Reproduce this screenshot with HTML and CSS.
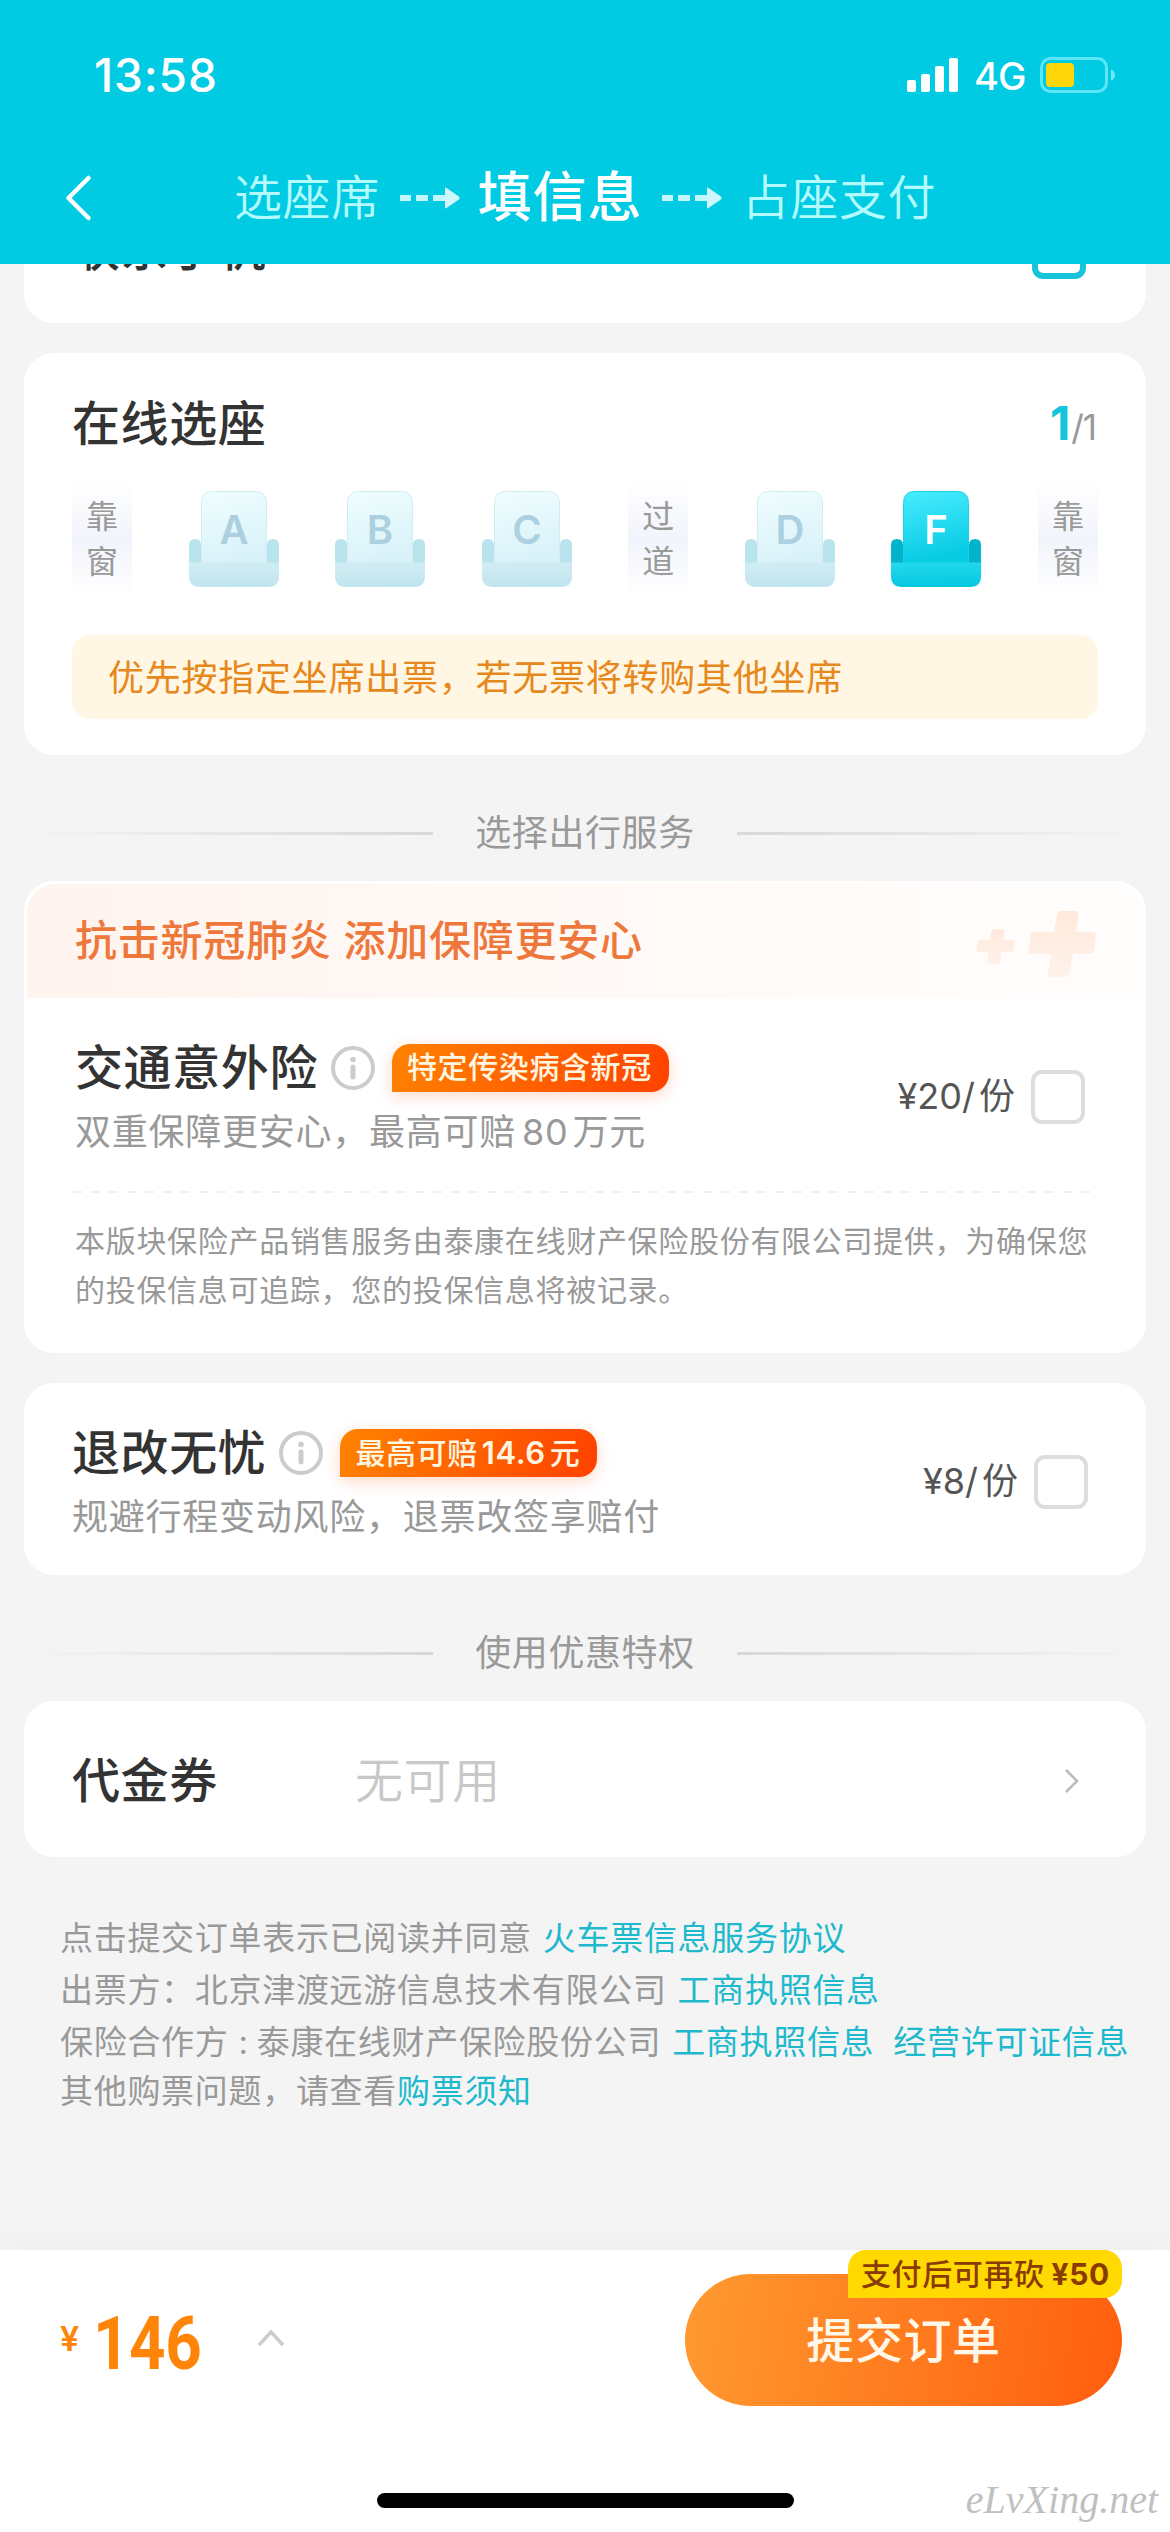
FILE: index.html
```html
<!DOCTYPE html>
<html lang="zh-CN">
<head>
<meta charset="utf-8">
<title>填信息</title>
<link rel="stylesheet" href="styles.css">
</head>
<body>
<svg class="defs" width="0" height="0" aria-hidden="true">
  <defs>
    <linearGradient id="back-idle" x1="0" y1="0" x2="0.25" y2="1"><stop offset="0" stop-color="#f0feff"/><stop offset="1" stop-color="#d9f2f9"/></linearGradient>
    <linearGradient id="base-idle" x1="0" y1="0" x2="0.1" y2="1"><stop offset="0" stop-color="#d2edf4"/><stop offset="1" stop-color="#c1e5ee"/></linearGradient>
    <linearGradient id="back-on" x1="0" y1="0" x2="0.2" y2="1"><stop offset="0" stop-color="#49ecff"/><stop offset="1" stop-color="#06cbe3"/></linearGradient>
    <linearGradient id="base-on" x1="0" y1="0" x2="0.1" y2="1"><stop offset="0" stop-color="#24d9ee"/><stop offset="1" stop-color="#06c8df"/></linearGradient>
    <linearGradient id="plus" x1="0" y1="0" x2="0" y2="1"><stop offset="0" stop-color="#ffe9dc"/><stop offset="1" stop-color="#fff2ea"/></linearGradient>
    <symbol id="seat" viewBox="0 0 90 96">
      <path d="M0 54q0-6 6-6t6 6v18H0zM90 54q0-6-6-6t-6 6v18h12z" fill="#b9e3ed"/>
      <path d="M12.500 72V12.500q0-12 11-12h43q11 0 11 12V72z" fill="url(#back-idle)" stroke="#d3ecf3"/>
      <path d="M0 71.500h90V85q0 11-11 11H11Q0 96 0 85z" fill="url(#base-idle)"/>
    </symbol>
    <symbol id="seat-on" viewBox="0 0 90 96">
      <path d="M0 54q0-6 6-6t6 6v18H0zM90 54q0-6-6-6t-6 6v18h12z" fill="#02b4cb"/>
      <path d="M12.500 72V12.500q0-12 11-12h43q11 0 11 12V72z" fill="url(#back-on)" stroke="#1ecfe3"/>
      <path d="M0 71.500h90V85q0 11-11 11H11Q0 96 0 85z" fill="url(#base-on)"/>
    </symbol>
    <symbol id="info" viewBox="0 0 44 44">
      <circle cx="22" cy="22" r="20" fill="none" stroke="#ccc" stroke-width="4"/>
      <circle cx="22" cy="13.500" r="2.800" fill="#ccc"/>
      <path d="M22 21v10" stroke="#ccc" stroke-width="5" stroke-linecap="round"/>
    </symbol>
    <symbol id="step-arrow" viewBox="0 0 60 22">
      <path d="M0 11h11M16 11h12M33 11h12" stroke="#c3f5fc" stroke-width="6"/>
      <path d="M45 1.500q0-1.500 1.500-.6l12 8.300q2.200 1.800 0 3.600l-12 8.300q-1.500.9-1.500-.6z" fill="#d0f7fc"/>
    </symbol>
  </defs>
</svg>

<div class="screen">
  <header class="header">
    <div class="status">
      <span class="status-time">13:58</span>
      <div class="status-right">
        <svg width="52" height="34" viewBox="0 0 52 34" fill="#fff"><rect x="0" y="22" width="9" height="12" rx="2"/><rect x="14" y="16" width="9" height="18" rx="2"/><rect x="28" y="8" width="9" height="26" rx="2"/><rect x="42" y="0" width="9" height="34" rx="2"/></svg>
        <span class="status-net">4G</span>
        <svg width="75" height="36" viewBox="0 0 75 36"><rect x="1.500" y="1.500" width="65" height="33" rx="9" fill="none" stroke="#5ce6f7" stroke-width="3"/><rect x="6" y="6" width="28" height="24" rx="4" fill="#ffd60a"/><path d="M71 12.500q4 1.500 4 5.500t-4 5.500z" fill="#6ceaf8"/></svg>
      </div>
    </div>
    <nav class="steps">
      <svg class="back" width="28" height="48" viewBox="0 0 28 48"><path d="M24.500 4L4.500 24l20 20" fill="none" stroke="#fff" stroke-width="4.500" stroke-linecap="round" stroke-linejoin="round"/></svg>
      <span class="step">选座席</span>
      <svg class="arrow arrow-first" width="60" height="22"><use href="#step-arrow"/></svg>
      <span class="step step-current">填信息</span>
      <svg class="arrow arrow-second" width="60" height="22"><use href="#step-arrow"/></svg>
      <span class="step">占座支付</span>
    </nav>
  </header>

  <main class="content">
    <section class="card contact">
      <span class="title contact-label">联系手机</span>
      <span class="checkbox checkbox-accent"></span>
    </section>

    <section class="card seats">
      <div class="seats-head">
        <h2 class="title">在线选座</h2>
        <div class="count"><b>1</b><span>/1</span></div>
      </div>
      <div class="seat-row">
        <span class="side">靠<br>窗</span>
        <svg class="seat" viewBox="0 0 90 96"><use href="#seat"/><text x="45" y="52.500">A</text></svg>
        <svg class="seat" viewBox="0 0 90 96"><use href="#seat"/><text x="45" y="52.500">B</text></svg>
        <svg class="seat" viewBox="0 0 90 96"><use href="#seat"/><text x="45" y="52.500">C</text></svg>
        <span class="side">过<br>道</span>
        <svg class="seat" viewBox="0 0 90 96"><use href="#seat"/><text x="45" y="52.500">D</text></svg>
        <svg class="seat seat-selected" viewBox="0 0 90 96"><use href="#seat-on"/><text x="45" y="52.500">F</text></svg>
        <span class="side">靠<br>窗</span>
      </div>
      <p class="notice">优先按指定坐席出票，若无票将转购其他坐席</p>
    </section>

    <div class="divider"><span>选择出行服务</span></div>

    <section class="card insurance">
      <div class="banner">
        <span>抗击新冠肺炎 添加保障更安心</span>
        <svg class="crosses" width="120" height="68" viewBox="0 0 120 68" fill="url(#plus)">
          <path d="M18 19h8q3 0 2.500 3l-1.300 8H36q3 0 2.500 3l-.8 6q-.5 3-3 3h-9l-1.500 9q-.5 3-3 3h-8q-2.500 0-2-3l1.500-9H3q-3 0-2.500-3l1-6q.5-3 3-3h9.500l1.300-8q.4-3 2.700-3z"/>
          <path d="M85 1h14q4 0 3.500 4l-2.500 17h16q4.500 0 4 4l-2 14q-.5 4-4 4H97l-3.500 19q-.6 4-4 4h-14q-4 0-3.500-4l3.500-19H56q-4 0-3.500-4l2-14q.5-4 4-4H78l3-17q.6-4 4-4z"/>
        </svg>
      </div>
      <div class="product">
        <div class="product-main">
          <div class="product-head">
            <h2 class="title">交通意外险</h2>
            <svg class="info" width="44" height="44"><use href="#info"/></svg>
            <span class="tag">特定传染病含新冠</span>
          </div>
          <p class="product-sub">双重保障更安心，最高可赔<span class="num">80</span>万元</p>
        </div>
        <span class="price">¥20/<i>份</i></span>
        <span class="checkbox"></span>
      </div>
      <div class="dashes"></div>
      <p class="disclaimer">本版块保险产品销售服务由泰康在线财产保险股份有限公司提供，为确保您<br>的投保信息可追踪，您的投保信息将被记录。</p>
    </section>

    <section class="card refund">
      <div class="product">
        <div class="product-main">
          <div class="product-head">
            <h2 class="title">退改无忧</h2>
            <svg class="info" width="44" height="44"><use href="#info"/></svg>
            <span class="tag">最高可赔<span class="tag-num">14.6</span>元</span>
          </div>
          <p class="product-sub">规避行程变动风险，退票改签享赔付</p>
        </div>
        <span class="price">¥8/<i>份</i></span>
        <span class="checkbox"></span>
      </div>
    </section>

    <div class="divider"><span>使用优惠特权</span></div>

    <section class="card voucher">
      <h2 class="title">代金券</h2>
      <span class="voucher-value">无可用</span>
      <svg width="16" height="26" viewBox="0 0 16 26"><path d="M2 2l11 11L2 24" fill="none" stroke="#bbb" stroke-width="2.500"/></svg>
    </section>

    <div class="terms">
      <p>点击提交订单表示已阅读并同意<a class="gap">火车票信息服务协议</a></p>
      <p>出票方：北京津渡远游信息技术有限公司<a class="gap">工商执照信息</a></p>
      <p>保险合作方<span class="colon">:</span>泰康在线财产保险股份公司<a class="gap">工商执照信息</a><a class="gap-wide">经营许可证信息</a></p>
      <p class="terms-last">其他购票问题，请查看<a>购票须知</a></p>
    </div>
  </main>

  <footer class="footer">
    <div class="total"><span class="yen">¥</span><span class="amount">146</span></div>
    <svg class="caret" width="28" height="18" viewBox="0 0 28 18"><path d="M2 16L14 3l12 13" fill="none" stroke="#ccc" stroke-width="3.500"/></svg>
    <div class="submit">提交订单<span class="badge">支付后可再砍<b>¥50</b></span></div>
    <div class="home"></div>
    <span class="watermark">eLvXing.net</span>
  </footer>
</div>
</body>
</html>
```
FILE: styles.css
```css
* { box-sizing: border-box; }

body, h2, p { margin: 0; }

body {
  background: #f4f4f4;
  font-family: Inter, "Noto Sans CJK SC", sans-serif;
  color: #333;
}

.defs { position: absolute; }
svg { display: block; flex: none; }
i { font-style: normal; }

.screen {
  width: 1170px;
  height: 2532px;
  overflow: hidden;
  display: flex;
  flex-direction: column;
  white-space: nowrap;
}

/* header */
.header { height: 264px; flex: none; background: #00cbe3; color: #fff; }

.status {
  height: 149px;
  padding: 0 55px 0 94px;
  display: flex;
  align-items: center;
  justify-content: space-between;
}
.status-time { font-size: 46px; font-weight: 550; letter-spacing: 0.9px; }
.status-right { display: flex; align-items: center; }
.status-net { width: 50px; margin: 2px 16px 0 15px; font-size: 38px; font-weight: 450; letter-spacing: -1px; }

.steps { height: 98px; padding-left: 64px; display: flex; align-items: center; }
.back { margin-right: 142px; }
.step { font-size: 48px; line-height: 60px; letter-spacing: 0.6px; font-weight: 350; color: #b4fbff; }
.step-current { font-size: 54px; font-weight: 500; letter-spacing: 1px; color: #fff; }
.arrow-first { margin: 0 18px 0 20px; }
.arrow-second { margin: 0 20px 0 19px; }

/* cards */
.content { flex: 1; padding: 0 24px; }
.card { background: #fff; border-radius: 30px; }
.title { font-size: 48px; line-height: 60px; font-weight: 500; letter-spacing: 0.6px; color: #333; }

.checkbox { width: 54px; height: 54px; flex: none; border: 4px solid #ddd; border-radius: 11px; background: #fff; }
.checkbox-accent { border: 6px solid #18c4da; }

.contact {
  height: 59px;
  padding: 0 60px 44px 48px;
  border-radius: 0 0 30px 30px;
  display: flex;
  align-items: flex-end;
  justify-content: space-between;
  overflow: hidden;
}
.contact-label { line-height: 48px; margin-bottom: 6px; }

.seats { height: 402px; margin-top: 30px; padding: 41px 48px 0; }
.seats-head { height: 60px; display: flex; justify-content: space-between; align-items: center; }
.count { display: flex; align-items: baseline; padding-right: 2px; line-height: 60px; margin-top: 2px; }
.count b { font-size: 47px; font-weight: 700; color: #14c5db; margin-right: 1px; }
.count span { font-size: 35px; color: #999; letter-spacing: -1px; }

.seat-row { height: 116px; margin-top: 27px; display: flex; justify-content: space-between; align-items: center; }
.side {
  width: 60px;
  height: 116px;
  padding: 13px 0;
  font-size: 32px;
  line-height: 45px;
  text-align: center;
  color: #999;
  background: linear-gradient(#fff, #f1f4fb 50%, #fff);
}
.seat { width: 90px; height: 96px; }
.seat text { font-size: 40px; font-weight: 600; text-anchor: middle; fill: #acd0df; }
.seat-selected text { fill: #fff; }

.notice {
  height: 84px;
  margin-top: 38px;
  padding-left: 36px;
  border-radius: 18px;
  background: #fff7e4;
  color: #e6881b;
  font-size: 36px;
  line-height: 86px;
  letter-spacing: 0.75px;
}

.divider {
  height: 126px;
  padding-top: 30px;
  display: flex;
  align-items: center;
  gap: 42px;
  font-size: 36px;
  line-height: 48px;
  letter-spacing: 0.6px;
  color: #999;
}
.divider::before, .divider::after { content: ""; flex: 1; height: 3px; background: linear-gradient(90deg, #f4f4f4, #d8d8d8); }
.divider::after { background: linear-gradient(270deg, #f4f4f4, #d8d8d8); }

/* insurance */
.insurance { height: 472px; padding: 3px; }
.banner {
  height: 114px;
  padding: 0 47px 0 48px;
  border-radius: 28px 28px 0 0;
  background: linear-gradient(90deg, #fff4ef, #fffaf7 55%, #fffdfc);
  display: flex;
  align-items: center;
  justify-content: space-between;
  color: #ee783c;
  font-size: 42px;
  line-height: 60px;
  font-weight: 500;
  letter-spacing: 0.75px;
}
.crosses { margin-top: 6px; }
.product { display: flex; align-items: center; }
.insurance .product { height: 193px; padding: 5px 58px 0 48px; }
.product-main { flex: 1; }
.product-head { height: 60px; display: flex; align-items: center; }
.info { margin: 0 17px 0 13px; }
.tag {
  height: 48px;
  padding: 0 17px 0 15px;
  border-radius: 18px 18px 18px 0;
  background: linear-gradient(105deg, #ff8200, #ff4200);
  box-shadow: 0 4px 16px rgba(255, 80, 0, 0.22);
  color: #fff6e2;
  font-size: 30px;
  line-height: 47px;
  font-weight: 500;
  letter-spacing: 0.6px;
}
.tag-num { margin: 0 4px; font-size: 31px; font-weight: 600; }
.product-sub { height: 50px; margin-top: 9px; font-size: 36px; line-height: 50px; letter-spacing: 0.75px; color: #999; }
.num { margin: 0 4px 0 6px; }
.price { font-size: 36px; line-height: 48px; color: #555; margin: -3px 16px 0 0; }
.price i { margin-left: 4px; }
.dashes { width: 1027px; height: 2px; margin: 0 0 0 46px; background: repeating-linear-gradient(90deg, #f0f0f0 0 9px, transparent 9px 18px); }
.disclaimer { margin: 24px 0 0 48px; font-size: 30px; line-height: 49px; letter-spacing: 0.7px; color: #999; }

.refund { height: 192px; margin-top: 30px; padding: 0 58px 0 48px; }
.refund .product { height: 192px; padding-top: 6px; }

/* voucher */
.voucher { height: 156px; padding: 3px 66px 0 48px; display: flex; align-items: center; }
.voucher .title { width: 283px; }
.voucher-value { flex: 1; font-size: 48px; line-height: 60px; letter-spacing: 0.6px; font-weight: 350; color: #c8c8c8; }

.terms { padding: 55px 0 0 36px; font-size: 33px; line-height: 52px; letter-spacing: 0.7px; color: #999; }
.terms a { color: #1fb9cd; }
.terms .gap { margin-left: 11px; }
.terms .gap-wide { margin-left: 19px; }
.terms-last { margin-top: -3px; }
.colon { margin: 0 8px 0 10px; }

/* footer */
.footer {
  position: relative;
  height: 282px;
  flex: none;
  padding: 24px 48px 0 60px;
  display: flex;
  align-items: flex-start;
  background: #fff;
  box-shadow: 0 0 30px rgba(0, 0, 0, 0.04);
}
.total { width: 197px; display: flex; align-items: baseline; font-family: Roboto, sans-serif; font-weight: 700; color: #ff8508; line-height: 132px; margin-top: 4px; }
.yen { width: 33px; font-family: Inter, sans-serif; font-size: 34px; font-weight: 600; position: relative; top: -18px; }
.amount { font-size: 74px; letter-spacing: -0.5px; transform: scaleX(0.86); transform-origin: left; }
.caret { margin-top: 55px; }
.submit {
  position: relative;
  width: 437px;
  height: 132px;
  margin-left: auto;
  border-radius: 66px;
  background: linear-gradient(100deg, #ff9a30, #ff5e0e);
  color: #fff8e8;
  font-size: 48px;
  font-weight: 500;
  line-height: 133px;
  letter-spacing: 0.6px;
  text-align: center;
}
.badge {
  position: absolute;
  top: -24px;
  right: 0;
  width: 274px;
  height: 48px;
  padding-left: 13px;
  border-radius: 18px 18px 18px 0;
  background: #ffd900;
  color: #8a3a04;
  font-size: 30px;
  line-height: 49px;
  text-align: left;
}
.badge b { margin-left: 7px; font-weight: 650; }
.home { position: absolute; left: 377px; bottom: 24px; width: 417px; height: 15px; border-radius: 8px; background: #000; }
.watermark { position: absolute; right: 12px; bottom: 8px; font: italic 40px/48px "Liberation Serif", serif; color: #c0c0c0; }
```
